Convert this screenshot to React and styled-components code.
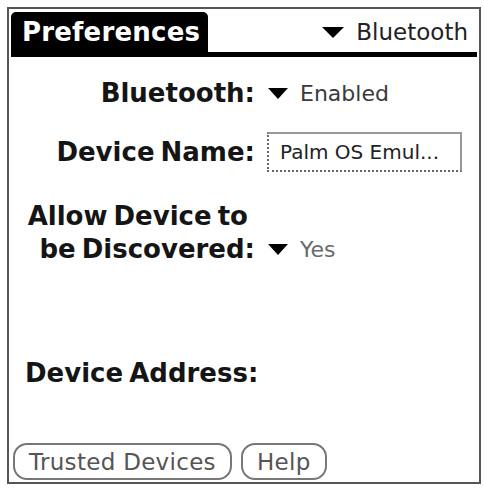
import React from "react";
import styled, { createGlobalStyle } from "styled-components";

const GlobalStyle = createGlobalStyle`
  html, body {
    margin: 0;
    padding: 0;
    background: #fff;
  }
  body {
    font-family: "DejaVu Sans", "Liberation Sans", sans-serif;
  }
`;

const Frame = styled.div`
  box-sizing: border-box;
  margin: 7px 0 0 7px;
  width: 474px;
  height: 477px;
  border: 2px solid #555;
  display: flex;
  flex-direction: column;
`;

const TitleBar = styled.div`
  display: flex;
  margin: 3px 2px 0 2px;
  border-bottom: 5px solid #000;
`;

const TitleTab = styled.div`
  box-sizing: border-box;
  width: 197px;
  height: 40px;
  padding-left: 11px;
  display: flex;
  align-items: center;
  background: #000;
  color: #fff;
  font-size: 26px;
  font-weight: bold;
  letter-spacing: 0.2px;
  border-radius: 5px 5px 0 0;
`;

const TitleMenu = styled.div`
  margin-left: auto;
  padding-right: 9px;
  display: flex;
  align-items: center;
  gap: 12px;
  font-size: 23px;
  color: #222;
`;

const Arrow = styled.span`
  display: inline-block;
  width: 0;
  height: 0;
  border-left: ${(p) => p.$w / 2}px solid transparent;
  border-right: ${(p) => p.$w / 2}px solid transparent;
  border-top: 11px solid #000;
`;

const Body = styled.div`
  flex: 1;
  display: flex;
  flex-direction: column;
  padding-bottom: 2px;
`;

const Row = styled.div`
  display: flex;
  align-items: ${(p) => (p.$bottom ? "flex-end" : "center")};
  min-height: 40px;
  margin-top: ${(p) => p.$top}px;
`;

const Label = styled.div`
  flex-shrink: 0;
  width: ${(p) => (p.$left ? "auto" : "246px")};
  padding-left: ${(p) => (p.$left ? "16px" : "0")};
  text-align: ${(p) => (p.$left ? "left" : "right")};
  font-size: 26px;
  font-weight: bold;
  line-height: 33px;
  color: #151515;
  word-spacing: -3px;
`;

const LabelLine = styled.span`
  display: block;
  padding-right: ${(p) => p.$pad || 0}px;
`;

const Value = styled.div`
  margin-left: 13px;
  height: 33px;
  display: flex;
  align-items: center;
  gap: 12px;
  font-size: 22px;
  color: ${(p) => p.$color};
`;

const Field = styled.div`
  box-sizing: border-box;
  margin-left: 12px;
  width: 195px;
  height: 40px;
  padding-left: 11px;
  display: flex;
  align-items: center;
  border: 2px dotted #666;
  border-top-style: solid;
  border-right-style: solid;
  border-top-color: #999;
  border-right-color: #999;
  font-size: 20px;
  color: #222;
  white-space: nowrap;
`;

const ButtonBar = styled.div`
  margin-top: auto;
  padding-left: 4px;
  display: flex;
  gap: 9px;
`;

const Button = styled.button`
  box-sizing: border-box;
  height: 37px;
  padding: 0 14px;
  border: 2px solid #777;
  border-radius: 14px;
  background: #fff;
  font-family: "DejaVu Sans", "Liberation Sans", sans-serif;
  font-size: 23px;
  letter-spacing: 0.3px;
  color: #555;
`;

export default function App() {
  return (
    <>
      <GlobalStyle />
      <Frame>
        <TitleBar>
          <TitleTab>Preferences</TitleTab>
          <TitleMenu>
            <Arrow $w={22} />
            Bluetooth
          </TitleMenu>
        </TitleBar>
        <Body>
          <Row $top={16}>
            <Label>Bluetooth:</Label>
            <Value $color="#3a3a3a">
              <Arrow $w={20} />
              Enabled
            </Value>
          </Row>
          <Row $top={19}>
            <Label>Device Name:</Label>
            <Field>Palm OS Emul...</Field>
          </Row>
          <Row $top={28} $bottom>
            <Label>
              <LabelLine $pad={7}>Allow Device to</LabelLine>
              <LabelLine>be Discovered:</LabelLine>
            </Label>
            <Value $color="#6a6a6a">
              <Arrow $w={20} />
              Yes
            </Value>
          </Row>
          <Row $top={87}>
            <Label $left>Device Address:</Label>
          </Row>
          <ButtonBar>
            <Button>Trusted Devices</Button>
            <Button>Help</Button>
          </ButtonBar>
        </Body>
      </Frame>
    </>
  );
}
